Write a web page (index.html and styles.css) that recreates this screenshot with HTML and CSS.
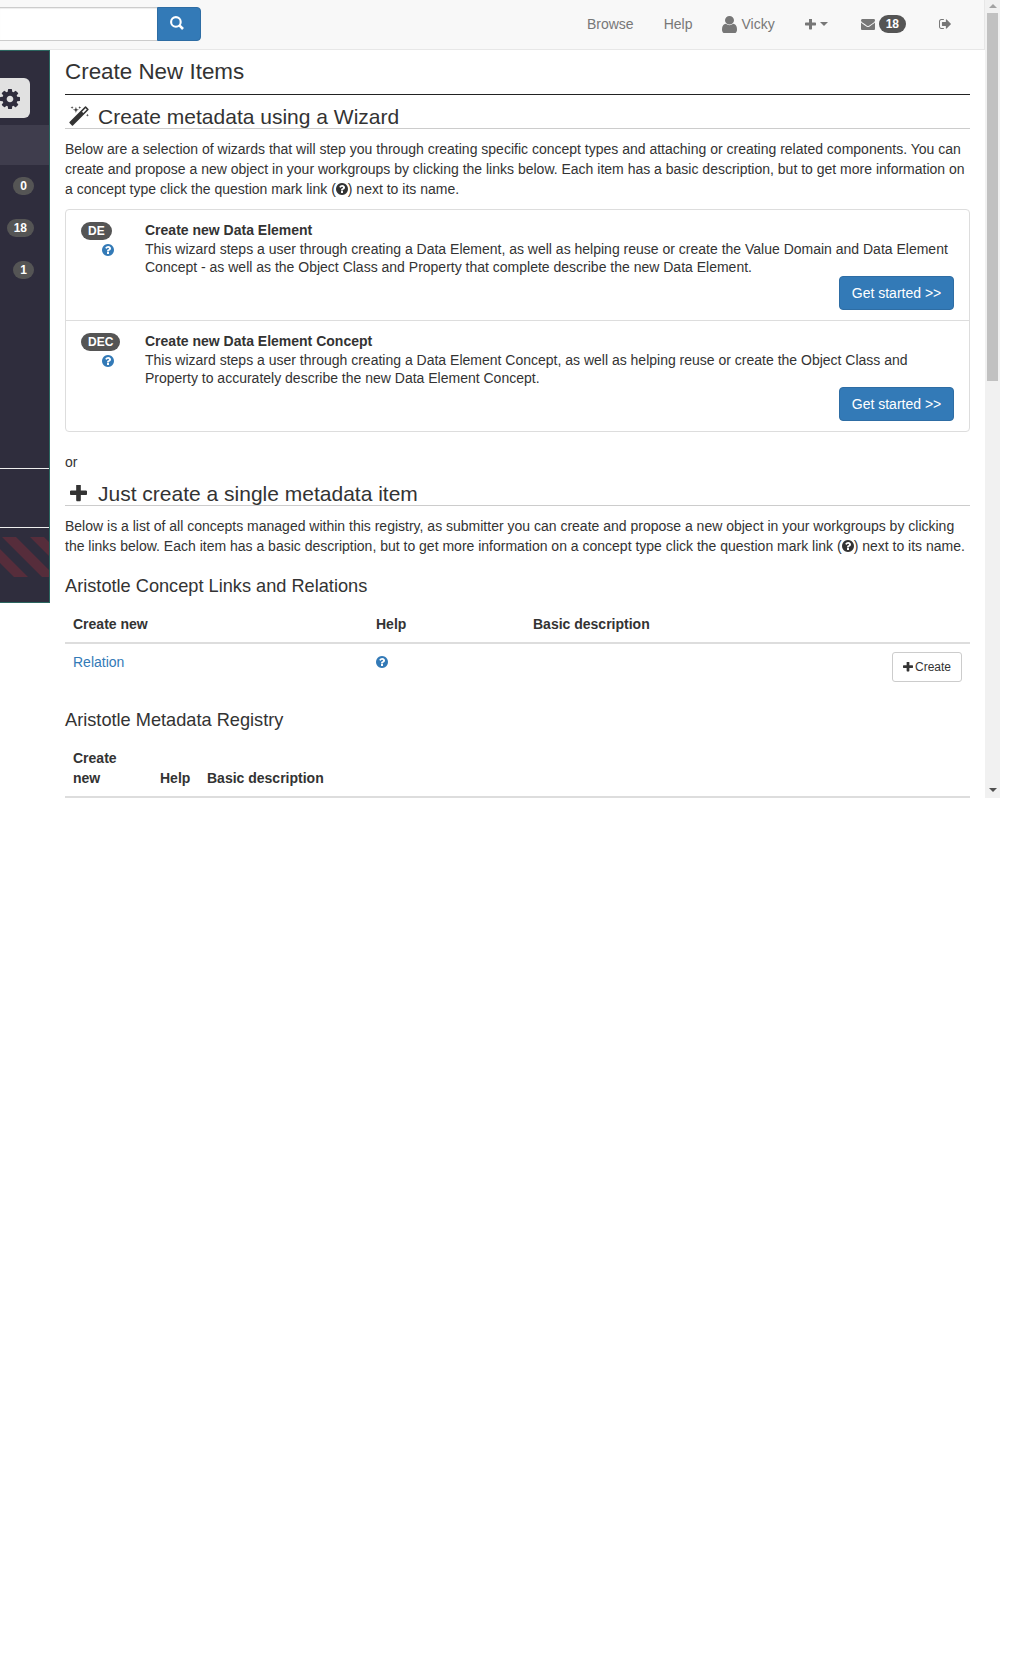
FILE: index.html
```html
<!DOCTYPE html>
<html lang="en">
<head>
<meta charset="utf-8">
<title>Create New Items</title>
<link rel="stylesheet" href="styles.css">
</head>
<body>
<svg class="defs" width="0" height="0">
  <symbol id="question" viewBox="128 128 1536 1536"><path d="M1024 1376v-192q0-14-9-23t-23-9h-192q-14 0-23 9t-9 23v192q0 14 9 23t23 9h192q14 0 23-9t9-23zm256-672q0-88-55.5-163t-138.500-116-170-41q-243 0-371 213-15 24 8 42l132 100q7 6 19 6 16 0 25-12 53-68 86-92 34-24 86-24 48 0 85.500 26t37.500 59q0 38-20 61t-68 45q-63 28-115.500 86.500t-52.500 125.500v36q0 14 9 23t23 9h192q14 0 23-9t9-23q0-19 21.500-49.500t54.500-49.500q32-18 49-28.500t46-35 44.500-48 28-60.500 12.500-81zm384 192q0 209-103 385.500t-279.500 279.500-385.500 103-385.500-103-279.500-279.500-103-385.500 103-385.500 279.500-279.500 385.500-103 385.500 103 279.500 279.500 103 385.500z"/></symbol>
  <symbol id="plus" viewBox="192 192 1408 1408"><path d="M1600 736v192q0 40-28 68t-68 28h-416v416q0 40-28 68t-68 28h-192q-40 0-68-28t-28-68v-416h-416q-40 0-68-28t-28-68v-192q0-40 28-68t68-28h416v-416q0-40 28-68t68-28h192q40 0 68 28t28 68v416h416q40 0 68 28t28 68z"/></symbol>
</svg>
<div class="app">
  <div class="page">
    <header class="navbar">
      <div class="search">
        <div class="search-input"></div>
        <div class="search-btn"><svg width="14" height="14" viewBox="0 0 14 14"><circle cx="5.9" cy="5.9" r="4.8"/><path d="M9.400 9.400L13 13"/></svg></div>
      </div>
      <nav class="nav">
        <a>Browse</a>
        <a>Help</a>
        <a><svg class="i-user" width="15" height="17" viewBox="256 128 1280 1536" preserveAspectRatio="none"><path d="M1536 1399q0 109-62.500 187t-150.500 78h-854q-88 0-150.500-78t-62.500-187q0-85 8.500-160.500t31.500-152 58.500-131 94-89 134.500-34.500q131 128 313 128t313-128q76 0 134.500 34.500t94 89 58.500 131 31.500 152 8.500 160.500zm-256-887q0 159-112.500 271.500t-271.500 112.500-271.500-112.500-112.500-271.500 112.500-271.500 271.500-112.500 271.500 112.500 112.500 271.500z"/></svg>Vicky</a>
        <a class="n-plus"><svg width="11" height="11"><use href="#plus"/></svg><i class="caret"></i></a>
        <a class="n-mail"><svg width="14" height="11" viewBox="0 256 1792 1408"><path d="M1792 710v794q0 66-47 113t-113 47h-1472q-66 0-113-47t-47-113v-794q44 49 101 87 362 246 497 345 57 42 92.500 65.500t94.500 48 110 24.500h2q51 0 110-24.500t94.500-48 92.500-65.500q170-123 498-345 57-39 100-87zm0-294q0 79-49 151t-122 123q-376 261-468 325-10 7-42.500 30.500t-54 38-52 32.500-57.500 27-50 9h-2q-23 0-50-9t-57.500-27-52-32.500-54-38-42.500-30.500q-91-64-262-182.500t-205-142.500q-62-42-117-115.500t-55-136.500q0-78 41.500-130t118.500-52h1472q65 0 112.500 47t47.500 113z"/></svg><span class="badge">18</span></a>
        <a class="n-out"><svg width="12" height="10" viewBox="0 256 1568 1280"><path d="M640 1440q0 4 1 20t.5 26.500-3 23.500-10 19.500-20.500 6.500h-320q-119 0-203.500-84.500t-84.500-203.500v-704q0-119 84.500-203.500t203.500-84.500h320q13 0 22.500 9.500t9.500 22.500q0 4 1 20t.5 26.500-3 23.500-10 19.500-20.500 6.500h-320q-66 0-113 47t-47 113v704q0 66 47 113t113 47h312l11.500 1 11.500 3 8 5.500 7 9 2 13.500zm928-544q0 26-19 45l-544 544q-19 19-45 19t-45-19-19-45v-288h-448q-26 0-45-19t-19-45v-384q0-26 19-45t45-19h448v-288q0-26 19-45t45-19 45 19l544 544q19 19 19 45z"/></svg></a>
      </nav>
    </header>
    <div class="body">
      <aside class="sidebar">
        <div class="gear"><svg width="20" height="20" viewBox="128 128 1536 1536"><path d="M1152 896q0-106-75-181t-181-75-181 75-75 181 75 181 181 75 181-75 75-181zm512-109v222q0 12-8 23t-20 13l-185 28q-19 54-39 91 35 50 107 138 10 12 10 25t-9 23q-27 37-99 108t-94 71q-12 0-26-9l-138-108q-44 23-91 38-16 136-29 186-7 28-36 28h-222q-14 0-24.500-8.500t-11.500-21.500l-28-184q-49-16-90-37l-141 107q-10 9-25 9-14 0-25-11-126-114-165-168-7-10-7-23 0-12 8-23 15-21 51-66.500t54-70.500q-27-50-41-99l-183-27q-13-2-21-12.500t-8-23.500v-222q0-12 8-23t19-13l186-28q14-46 39-92-40-57-107-138-10-12-10-24 0-10 9-23 26-36 98.500-107.500t94.500-71.500q13 0 26 10l138 107q44-23 91-38 16-136 29-186 7-28 36-28h222q14 0 24.500 8.500t11.500 21.500l28 184q49 16 90 37l142-107q9-9 24-9 13 0 25 10 129 119 165 170 7 8 7 22 0 12-8 23-15 21-51 66.500t-54 70.500q26 50 41 98l183 28q13 2 21 12.500t8 23.500z"/></svg></div>
        <div class="side-active"></div>
        <div class="side-row"><span class="badge">0</span></div>
        <div class="side-row"><span class="badge">18</span></div>
        <div class="side-row"><span class="badge">1</span></div>
        <div class="side-box"></div>
        <svg class="stripes" width="49" height="40"><path d="M2 0H16L56 40H42ZM30 0H44L84 40H70ZM-26 0H-12L28 40H14Z"/></svg>
      </aside>
      <main class="content">
        <h1>Create New Items</h1>
        <h2><span class="h-icon wand"><svg width="20" height="20" viewBox="64 0 1664 1664"><path d="M1254 581l293-293-107-107-293 293zm447-293q0 27-18 45l-1286 1286q-18 18-45 18t-45-18l-198-198q-18-18-18-45t18-45l1286-1286q18-18 45-18t45 18l198 198q18 18 18 45zm-1351-190l98 30-98 30-30 98-30-98-98-30 98-30 30-98zm350 162l196 60-196 60-60 196-60-196-196-60 196-60 60-196zm930 478l98 30-98 30-30 98-30-98-98-30 98-30 30-98zm-640-640l98 30-98 30-30 98-30-98-98-30 98-30 30-98z"/></svg></span>Create metadata using a Wizard</h2>
        <p>Below are a selection of wizards that will step you through creating specific concept types and attaching or creating related components. You can create and propose a new object in your workgroups by clicking the links below. Each item has a basic description, but to get more information on a concept type click the question mark link (<svg class="q" width="12" height="12"><use href="#question"/></svg>) next to its name.</p>
        <div class="list">
          <div class="item">
            <div class="item-tag"><span class="badge">DE</span><svg class="q link" width="12" height="12"><use href="#question"/></svg></div>
            <div class="item-main"><h4>Create new Data Element</h4><div class="desc">This wizard steps a user through creating a Data Element, as well as helping reuse or create the Value Domain and Data Element Concept - as well as the Object Class and Property that complete describe the new Data Element.</div><a class="btn">Get started &gt;&gt;</a></div>
          </div>
          <div class="item">
            <div class="item-tag"><span class="badge">DEC</span><svg class="q link" width="12" height="12"><use href="#question"/></svg></div>
            <div class="item-main"><h4>Create new Data Element Concept</h4><div class="desc">This wizard steps a user through creating a Data Element Concept, as well as helping reuse or create the Object Class and Property to accurately describe the new Data Element Concept.</div><a class="btn">Get started &gt;&gt;</a></div>
          </div>
        </div>
        <div class="or">or</div>
        <h2><span class="h-icon add"><svg width="17" height="17"><use href="#plus"/></svg></span>Just create a single metadata item</h2>
        <p>Below is a list of all concepts managed within this registry, as submitter you can create and propose a new object in your workgroups by clicking the links below. Each item has a basic description, but to get more information on a concept type click the question mark link (<svg class="q" width="12" height="12"><use href="#question"/></svg>) next to its name.</p>
        <h3>Aristotle Concept Links and Relations</h3>
        <div class="grid g1 head"><b>Create new</b><b>Help</b><b>Basic description</b></div>
        <div class="grid g1 row"><a class="link">Relation</a><span><svg class="q link" width="12" height="12"><use href="#question"/></svg></span><a class="btn-sm"><svg width="10" height="10"><use href="#plus"/></svg>Create</a></div>
        <h3>Aristotle Metadata Registry</h3>
        <div class="grid g2 head"><b>Create new</b><b>Help</b><b>Basic description</b></div>
      </main>
    </div>
  </div>
  <div class="scrollbar"><i class="up"></i><div class="thumb"></div><i class="down"></i></div>
</div>
</body>
</html>
```
FILE: styles.css
```css
* { box-sizing: border-box; }
body { margin: 0; background: #fff; color: #333; font: 14px/20px "Liberation Sans", Arial, sans-serif; }
svg { fill: currentColor; flex: none; }
.defs { display: block; position: absolute; }
.app { display: flex; width: 1000px; height: 798px; overflow: hidden; }
.page { width: 985px; }

.navbar { display: flex; justify-content: space-between; height: 50px; background: #f8f8f8; border: solid #e7e7e7; border-width: 0 1px 1px 0; color: #777; }
.search { display: flex; padding-top: 7px; }
.search-input { width: 157px; height: 34px; background: #fff; border: solid #ccc; border-width: 1px 0; box-shadow: inset 0 1px 1px rgba(0,0,0,.075); }
.search-btn { width: 44px; height: 34px; padding: 8px 0 0 12px; background: #337ab7; border: 1px solid #2e6da4; border-radius: 0 4px 4px 0; color: #fff; }
.search-btn svg { display: block; fill: none; stroke: #fff; stroke-width: 2.1; }
.search-btn path { stroke-width: 2.6; }
.nav { display: flex; height: 48px; align-items: center; padding-right: 18px; }
.nav a { display: flex; align-items: center; padding: 0 15px; }
.nav .n-plus, .nav .n-mail { padding-right: 18px; }
.i-user { margin-right: 4px; }
.caret { margin-left: 4px; border: 4px solid transparent; border-top-color: currentColor; border-bottom: 0; }
.badge { display: inline-block; min-width: 10px; padding: 3px 7px; border-radius: 10px; background: #555; color: #fff; font-size: 12px; line-height: 12px; font-weight: bold; text-align: center; }
.n-mail .badge { margin-left: 4px; }

.body { display: flex; align-items: flex-start; }
.sidebar { display: flex; flex-direction: column; width: 50px; height: 553px; background: #2f2d3d; border: solid #2b6660; border-width: 1px 1px 1px 0; }
.gear { width: 30px; height: 40px; margin-top: 27px; padding-top: 11px; background: #e1e1e1; border-radius: 0 6px 6px 0; color: #2f2d3d; }
.gear svg { display: block; }
.side-active { height: 40px; margin-top: 7px; background: #3f3d4d; }
.side-row { display: flex; height: 42px; padding: 12px 15px 0 0; justify-content: flex-end; align-items: flex-start; }
.side-box { height: 60px; margin-top: 177px; border: solid #eee; border-width: 1px 0; }
.stripes { margin-top: 9px; display: block; color: #562d3b; }

.content { width: 935px; padding: 0 15px; }
.content h1, .content h2, .content h3, .content h4, .content p { margin: 0; font-weight: normal; }
.content h1 { height: 45px; padding-top: 9px; border-bottom: 1px solid #222; font-size: 22.4px; line-height: 25px; }
.content h2 { display: flex; height: 34px; padding-top: 10px; border-bottom: 1px solid #ccc; font-size: 21px; line-height: 23px; }
.h-icon { width: 33px; }
.h-icon svg { display: block; }
.wand { padding: 1px 0 0 4px; }
.add { padding: 3px 0 0 5px; }
.content p { padding-top: 10px; }
.q { vertical-align: -1px; }
.link { color: #337ab7; }
.list { margin-top: 10px; border: 1px solid #ddd; border-radius: 4px; }
.item { display: flex; height: 110px; padding: 10px 15px; }
.item + .item { height: 111px; border-top: 1px solid #ddd; }
.item-tag { display: flex; flex-direction: column; align-items: flex-start; width: 64px; padding-top: 2px; }
.item-tag .q { margin: 4px 0 0 21px; }
.item-main { flex: 1; display: flex; flex-direction: column; }
.content h4 { font-size: 14px; line-height: 20px; font-weight: bold; }
.desc { line-height: 18px; }
.btn { align-self: flex-end; width: 115px; height: 34px; line-height: 32px; border: 1px solid #2e6da4; border-radius: 4px; background: #337ab7; color: #fff; text-align: center; }
.or { padding-top: 20px; height: 40px; }
.content h3 { font-size: 18.2px; line-height: 20px; }
.content p + h3 { margin-top: 20px; }
.grid { display: grid; padding: 8px; align-items: end; }
.g1 { grid-template-columns: 303px 157px 1fr; }
.g2 { grid-template-columns: 87px 47px 1fr; }
.g2 b:first-child { width: 60px; }
.head { margin-top: 10px; border-bottom: 2px solid #ddd; }
.row { align-items: start; height: 56px; }
.btn-sm { display: flex; justify-self: end; justify-content: center; align-items: center; gap: 2px; width: 70px; height: 30px; border: 1px solid #ccc; border-radius: 3px; font-size: 12px; line-height: 18px; }
.content .row + h3 { margin-top: 10px; }

.scrollbar { display: flex; flex-direction: column; align-items: center; width: 15px; height: 798px; padding: 4px 0 6px; background: #f1f1f1; }
.up { border: 4px solid transparent; border-bottom-color: #a3a3a3; border-top: 0; }
.down { margin-top: auto; border: 4px solid transparent; border-top-color: #505050; border-bottom: 0; }
.thumb { width: 11px; height: 368px; margin-top: 5px; background: #c1c1c1; }
```
